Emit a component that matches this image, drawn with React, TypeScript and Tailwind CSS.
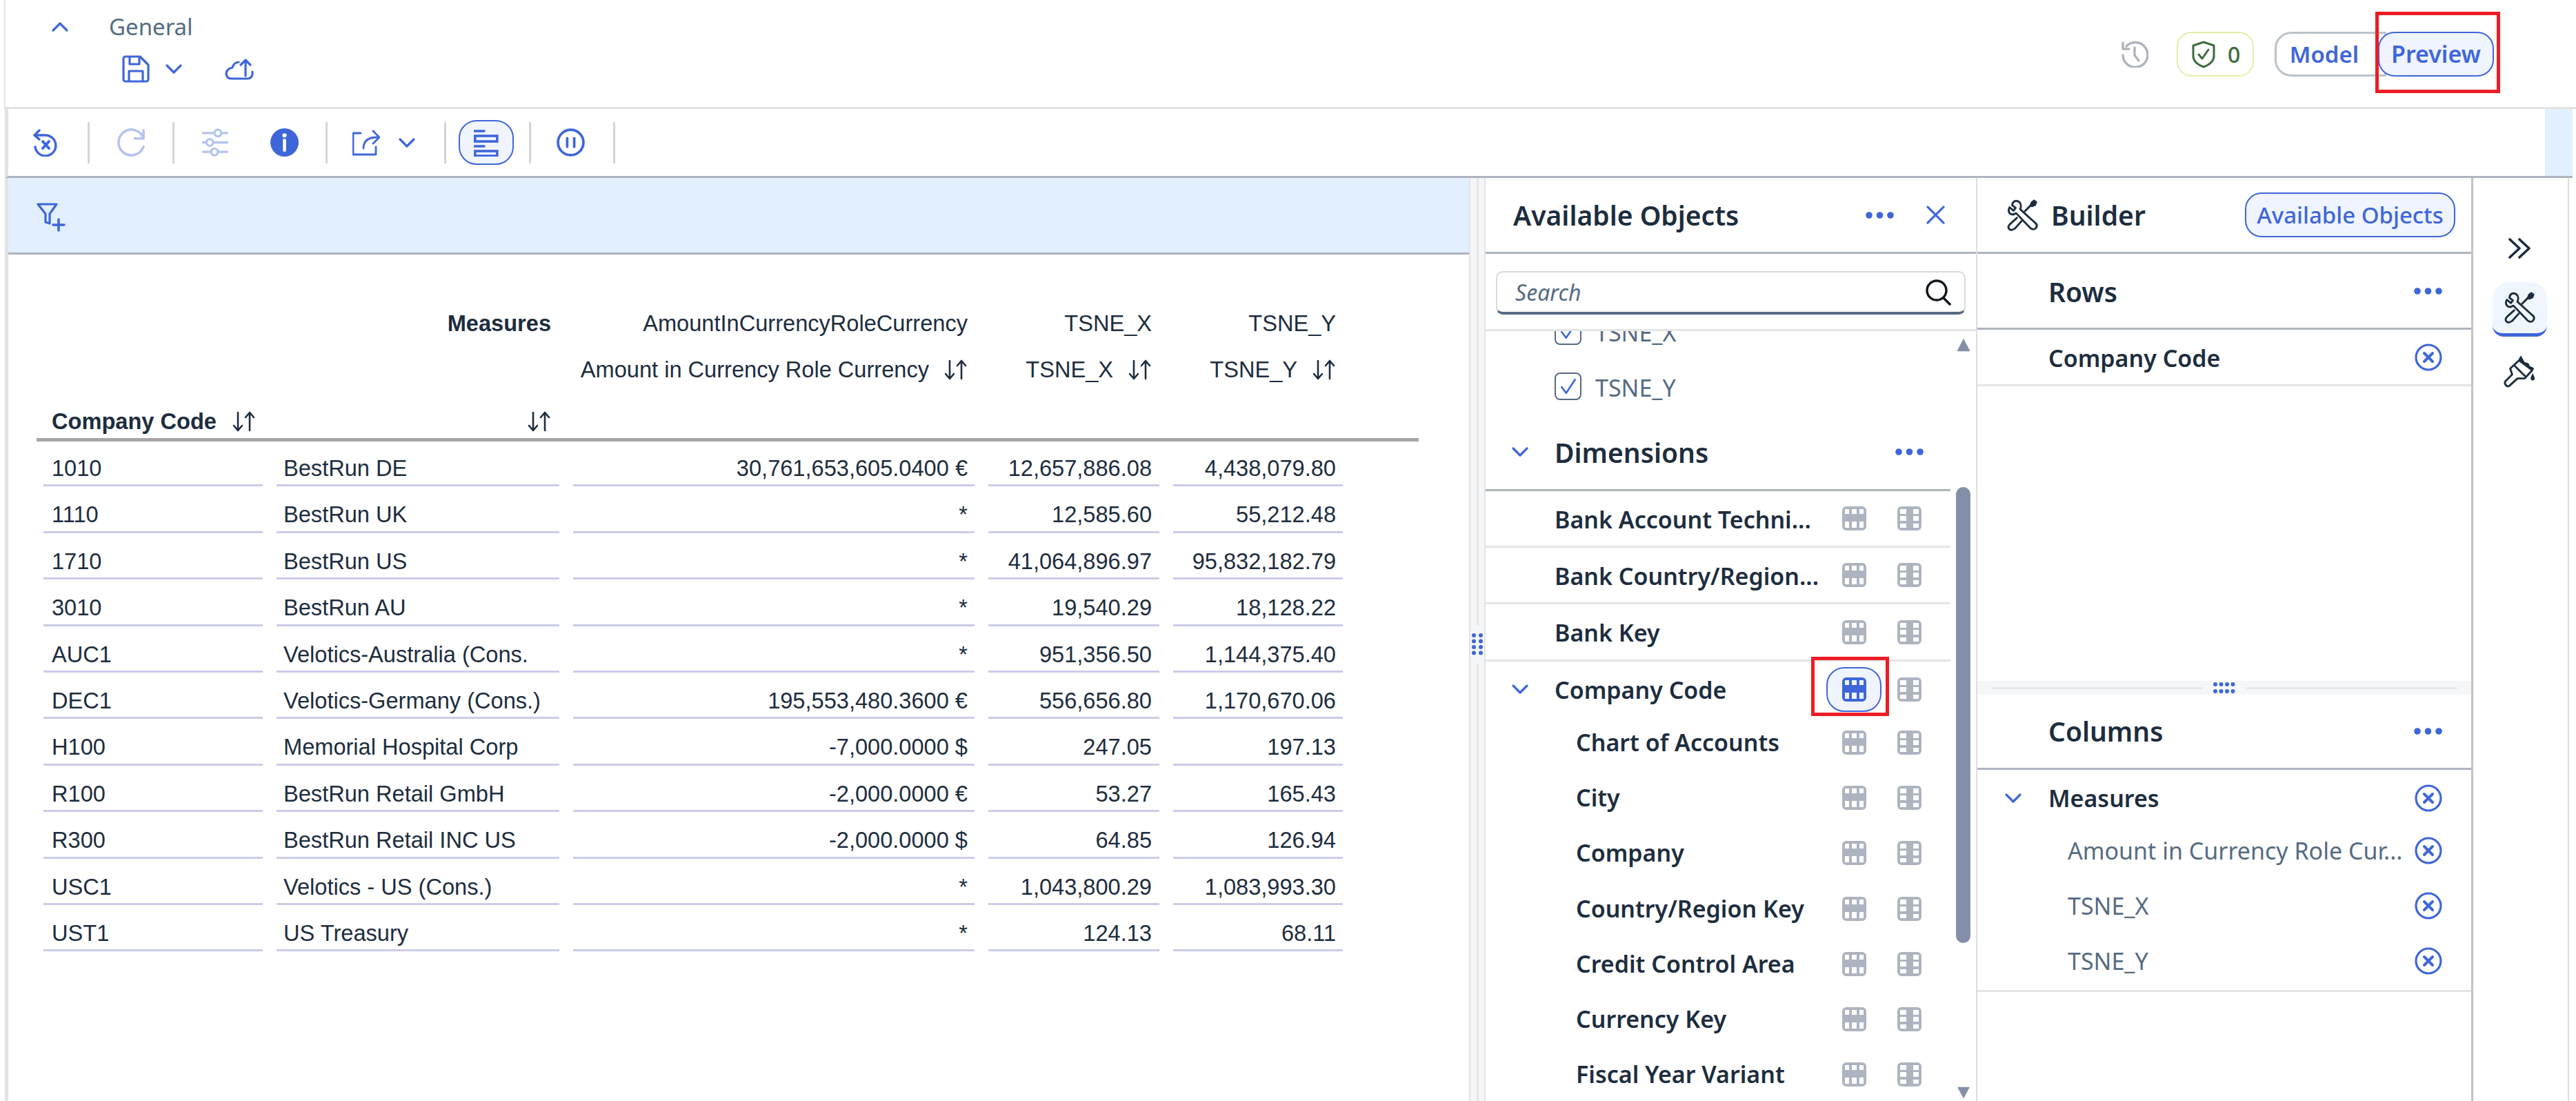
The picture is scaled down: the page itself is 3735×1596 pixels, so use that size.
const rows = [
  ["1010", "BestRun DE", "30,761,653,605.0400 €", "12,657,886.08", "4,438,079.80"],
  ["1110", "BestRun UK", "*", "12,585.60", "55,212.48"],
  ["1710", "BestRun US", "*", "41,064,896.97", "95,832,182.79"],
  ["3010", "BestRun AU", "*", "19,540.29", "18,128.22"],
  ["AUC1", "Velotics-Australia (Cons.", "*", "951,356.50", "1,144,375.40"],
  ["DEC1", "Velotics-Germany (Cons.)", "195,553,480.3600 €", "556,656.80", "1,170,670.06"],
  ["H100", "Memorial Hospital Corp", "-7,000.0000 $", "247.05", "197.13"],
  ["R100", "BestRun Retail GmbH", "-2,000.0000 €", "53.27", "165.43"],
  ["R300", "BestRun Retail INC US", "-2,000.0000 $", "64.85", "126.94"],
  ["USC1", "Velotics - US (Cons.)", "*", "1,043,800.29", "1,083,993.30"],
  ["UST1", "US Treasury", "*", "124.13", "68.11"],
];

const children = ["Chart of Accounts", "City", "Company", "Country/Region Key", "Credit Control Area", "Currency Key", "Fiscal Year Variant"];

type IconProps = { className?: string };

function Chevron({ className = "", up = false }: IconProps & { up?: boolean }) {
  return (
    <svg viewBox="0 0 26 16" className={className} fill="none" stroke="currentColor" strokeWidth="3.2" strokeLinecap="round" strokeLinejoin="round">
      <path d={up ? "M3 13 13 3l10 10" : "M3 3l10 10L23 3"} />
    </svg>
  );
}

function Dots({ className = "" }: IconProps) {
  return (
    <svg viewBox="0 0 41 12" className={className} fill="currentColor">
      <circle cx="5" cy="6" r="4.8" />
      <circle cx="20.5" cy="6" r="4.8" />
      <circle cx="36" cy="6" r="4.8" />
    </svg>
  );
}

function CircleX({ className = "" }: IconProps) {
  return (
    <svg viewBox="0 0 40 40" className={className} fill="none" stroke="currentColor">
      <circle cx="20" cy="20" r="18" strokeWidth="3.2" />
      <path d="M14 14l12 12M26 14 14 26" strokeWidth="4" strokeLinecap="round" />
    </svg>
  );
}

function SortIcon() {
  return (
    <svg viewBox="0 0 36 32" className="w-[36px] h-[32px] shrink-0 text-[#1d2d3e]" fill="none" stroke="currentColor" strokeWidth="2.6" strokeLinecap="round" strokeLinejoin="round">
      <path d="M10 3v26M4 22l6 7 6-7" />
      <path d="M27 29V3M21 10l6-7 6 7" />
    </svg>
  );
}

function ToolsIcon({ className = "" }: IconProps) {
  return (
    <svg viewBox="-1 -1 48 48" className={className} fill="none" stroke="currentColor" strokeWidth="3" strokeLinejoin="round" strokeLinecap="round">
      <path d="M17 2C12 0 8 3 8 8l5 4-3 4-6-5C1 16 3 22 9 22l5-2 21 22c3 3 7 3 9 0s1-6-2-8L20 14c2-5 1-10-3-12Z" />
      <path d="M15 27 4 37c-3 3-2 7 1 8s5-1 7-2l10-11" />
      <path d="M27 17l9-9" />
      <path d="M35 9l2-6 4-3 4 3-2 5-5 2Z" fill="currentColor" strokeWidth="1.5" />
    </svg>
  );
}

function BrushIcon({ className = "" }: IconProps) {
  return (
    <svg viewBox="-1 -1 48 48" className={className} fill="none" stroke="currentColor" strokeWidth="3" strokeLinejoin="round" strokeLinecap="round">
      <path d="M22 6 9 18l3 9L2 37c-3 4 2 10 6 7l12-11h11l11-12" />
      <path d="M15 13l16 16" />
      <path d="M25 0l-3 6 20 15 2-3-6-3-2-4-6-2Z" fill="currentColor" strokeWidth="2" />
      <path d="M43 25c-2 4-3 6-3 8a3 3 0 0 0 6 0c0-2-1-4-3-8Z" fill="currentColor" strokeWidth="0" />
    </svg>
  );
}

function RowIcon({ className = "" }: IconProps) {
  return (
    <svg viewBox="0 0 35 35" className={className} fill="currentColor">
      <path fillRule="evenodd" d="M6 0h23a6 6 0 0 1 6 6v23a6 6 0 0 1-6 6H6a6 6 0 0 1-6-6V6a6 6 0 0 1 6-6ZM4 4v7h6V4H4Zm10 0v7h7V4h-7Zm11 0v7h6V4h-6ZM4 22v9h6v-9H4Zm10 0v9h7v-9h-7Zm11 0v9h6v-9h-6Z" />
    </svg>
  );
}

function ColIcon({ className = "" }: IconProps) {
  return (
    <svg viewBox="0 0 35 35" className={className} fill="currentColor">
      <path fillRule="evenodd" d="M6 0h23a6 6 0 0 1 6 6v23a6 6 0 0 1-6 6H6a6 6 0 0 1-6-6V6a6 6 0 0 1 6-6ZM4 4v7h9V4H4Zm0 10v7h9v-7H4Zm0 11v6h9v-6H4ZM23 4v7h8V4h-8Zm0 10v7h8v-7h-8Zm0 11v6h8v-6h-8Z" />
    </svg>
  );
}

function DimRow({ label, chevron, child, border, active, className = "" }: { label: string; chevron?: boolean; child?: boolean; border?: boolean; active?: boolean; className?: string }) {
  return (
    <div className={`flex items-center ${border ? "border-b-[3px] border-[#e5e5e5]" : ""} ${className}`}>
      <div className="w-[100px] flex justify-center shrink-0">
        {chevron && <Chevron className="w-[26px] h-[16px] text-[#3f66d9]" />}
      </div>
      <div className={`flex-1 min-w-0 whitespace-nowrap text-[34px] font-semibold text-[#1d2d3e] ${child ? "pl-[31px]" : "pt-[3px]"}`}>{label}</div>
      {/* action buttons */}
      <div className="w-[80px] flex justify-center relative">
        {active ? (
          <>
            <span className="w-[80px] h-[65px] rounded-[26px] border-[2px] border-[#3f66d9] bg-[#eff4fe] flex items-center justify-center">
              <RowIcon className="w-[35px] h-[35px] text-[#3f66d9]" />
            </span>
            <span className="absolute left-[-22px] top-[-15px] w-[113px] h-[86px] border-[5px] border-[#ee1c25]" />
          </>
        ) : (
          <RowIcon className="w-[35px] h-[35px] text-[#aeb4bf]" />
        )}
      </div>
      <div className="w-[80px] flex justify-center">
        <ColIcon className="w-[35px] h-[35px] text-[#aeb4bf]" />
      </div>
      <div className="w-[20px]" />
    </div>
  );
}

function GripDots({ className = "" }: IconProps) {
  return (
    <svg viewBox="0 0 16 32" className={className} fill="currentColor">
      {[3, 11.5, 20, 28.5].flatMap((y) => [3, 13].map((x) => <circle key={`${x}-${y}`} cx={x} cy={y} r="3" />))}
    </svg>
  );
}

function GripDotsWide({ className = "" }: IconProps) {
  return (
    <svg viewBox="0 0 32 16" className={className} fill="currentColor">
      {[3, 11.5, 20, 28.5].flatMap((x) => [3, 13].map((y) => <circle key={`${x}-${y}`} cx={x} cy={y} r="3" />))}
    </svg>
  );
}

export default function App() {
  return (
    <div className="w-[3735px] h-[1596px] flex flex-col overflow-hidden bg-white font-['Noto_Sans',sans-serif]">
      {/* Top bar */}
      <header className="h-[158px] shrink-0 ml-[6px] border-l-[2px] border-b-[3px] border-[#e3e3e3] flex justify-between">
        <div className="flex flex-col">
          <div className="h-[77px] flex items-center pl-[66px]">
            <Chevron up className="w-[26px] h-[16px] text-[#3f66d9]" />
            <span className="ml-[58px] text-[33px] text-[#556b82]">General</span>
          </div>
          <div className="flex items-center pl-[169px] h-[42px] mt-[2px]">
            <svg viewBox="0 0 40 40" className="w-[40px] h-[40px] text-[#3f66d9]" fill="none" stroke="currentColor" strokeWidth="3.2" strokeLinejoin="round">
              <path d="M5 2h21l12 12v21a3 3 0 0 1-3 3H5a3 3 0 0 1-3-3V5a3 3 0 0 1 3-3Z" />
              <path d="M11 2v11h14V2M10 38V23h20v15" />
            </svg>
            <Chevron className="ml-[22px] w-[26px] h-[16px] text-[#3f66d9]" />
            <svg viewBox="0 0 42 32" className="ml-[61px] w-[42px] h-[32px] text-[#3f66d9]" fill="none" stroke="currentColor" strokeWidth="3.2" strokeLinecap="round" strokeLinejoin="round">
              <path d="M20 6c-4 0-8 3-9 8-5 1-9 4-9 9 0 4 3 7 7 7h24c4 0 7-3 7-7v-3" />
              <path d="M30 26V3M23 10l7-7 7 7" />
            </svg>
          </div>
        </div>
        <div className="flex items-start pt-[46px] pr-[119px]">
          <svg viewBox="0 0 40 40" className="w-[40px] h-[40px] mt-[12px] text-[#aeb4bb]" fill="none" stroke="currentColor" strokeWidth="3.4" strokeLinecap="round" strokeLinejoin="round">
            <path d="M8 9a18 18 0 1 1-5 13" />
            <path d="M3 4v9h9M20 11v11l6 8" />
          </svg>
          <div className="ml-[41px] w-[112px] h-[65px] rounded-[22px] border-[2px] border-[#e6eda6] flex items-center pl-[20px]">
            <svg viewBox="0 0 34 40" className="w-[34px] h-[40px] text-[#3d6b3d]" fill="none" stroke="currentColor" strokeWidth="3" strokeLinejoin="round" strokeLinecap="round">
              <path d="M17 2 32 7v15c0 8-7 13-15 16C9 35 2 30 2 22V7L17 2Z" />
              <path d="M10 20l5 6 9-13" />
            </svg>
            <span className="ml-[18px] text-[32px] font-medium text-[#3d6b3d]">0</span>
          </div>
          <button className="ml-[30px] w-[162px] h-[65px] rounded-l-[24px] border-[3px] border-[#bcc3ca] pr-[18px] text-[33px] font-semibold text-[#3f66d9]">Model</button>
          <button className="relative -ml-[12px] w-[168px] h-[65px] rounded-[24px] border-[2px] border-[#3f66d9] bg-[#eff4fe] text-[34px] font-semibold text-[#3f66d9]">
            Preview
            <span className="absolute left-[-6px] top-[-31px] w-[181px] h-[118px] border-[5px] border-[#ee1c25]" />
          </button>
        </div>
      </header>

      {/* Toolbar */}
      <div className="h-[100px] shrink-0 ml-[7px] mr-[5px] border-l-[5px] border-b-[3px] border-[#e3e3e3] border-b-[#aeb4c0] flex items-center">
        <div className="w-[115px] pr-[7px] flex justify-center">
          <svg viewBox="0 0 36 40" className="w-[36px] h-[40px] text-[#3f66d9]" fill="none" stroke="currentColor" strokeWidth="3.4" strokeLinecap="round" strokeLinejoin="round">
            <path d="M9 2 2 9l7 6" />
            <path d="M3 9h15a15 15 0 1 1-15 17" />
            <path d="M14 18l9 10M23 18l-9 10" strokeWidth="4" />
          </svg>
        </div>
        <span className="w-[3px] h-[60px] bg-[#d4d4d4]" />
        <div className="w-[120px] flex justify-center">
          <svg viewBox="0 0 42 42" className="w-[41px] h-[41px] text-[#b4c3f0]" fill="none" stroke="currentColor" strokeWidth="3.6" strokeLinecap="round" strokeLinejoin="round">
            <path d="M39 15A19 19 0 1 0 39 27" />
            <path d="M39 3v12H26" />
          </svg>
        </div>
        <span className="w-[3px] h-[60px] bg-[#d4d4d4]" />
        <div className="w-[118px] flex justify-center">
          <svg viewBox="0 0 40 42" className="w-[40px] h-[41px] text-[#b4c3f0]" fill="none" stroke="currentColor" strokeWidth="3.4" strokeLinecap="round">
            <path d="M2 7h15M31 7h7M2 21h4M19 21h19M2 35h10M26 35h12" />
            <circle cx="24" cy="7" r="5" />
            <circle cx="12" cy="21" r="5" />
            <circle cx="19" cy="35" r="5" />
          </svg>
        </div>
        <div className="w-[82px] flex justify-center">
          <svg viewBox="0 0 40 40" className="w-[41px] h-[41px] text-[#3f66d9]">
            <circle cx="20" cy="20" r="20" fill="currentColor" />
            <circle cx="20" cy="10" r="3" fill="#fff" />
            <path d="M20 17v14" stroke="#fff" strokeWidth="4.5" strokeLinecap="round" />
          </svg>
        </div>
        <div className="w-[19px]" />
        <span className="w-[3px] h-[60px] bg-[#d4d4d4]" />
        <div className="w-[169px] flex items-center pl-[36px]">
          <svg viewBox="0 0 40 38" className="w-[40px] h-[38px] text-[#3f66d9]" fill="none" stroke="currentColor" strokeWidth="2.8" strokeLinecap="round" strokeLinejoin="round">
            <path d="M12 5H1v31h33V25" />
            <path d="M16 27c0-10 6-16 20-16" />
            <path d="M30 2l9 9-9 9" />
          </svg>
          <Chevron className="ml-[26px] w-[26px] h-[16px] text-[#3f66d9]" />
        </div>
        <span className="w-[3px] h-[60px] bg-[#d4d4d4]" />
        <button className="ml-[18px] w-[80px] h-[65px] rounded-[26px] border-[2px] border-[#3f66d9] bg-[#eff4fe] flex items-center justify-center">
          <svg viewBox="0 0 36 40" className="w-[36px] h-[40px] text-[#3f66d9]" fill="none" stroke="currentColor" strokeWidth="3.6">
            <path d="M1 3h14M1 25h14" strokeLinecap="round" />
            <rect x="1.8" y="10" width="32" height="8" />
            <rect x="1.8" y="32" width="32" height="7" />
          </svg>
        </button>
        <div className="w-[22px]" />
        <span className="w-[3px] h-[60px] bg-[#d4d4d4]" />
        <div className="w-[119px] pr-[4px] flex justify-center">
          <svg viewBox="0 0 40 40" className="w-[41px] h-[41px] text-[#3f66d9]" fill="none" stroke="currentColor">
            <circle cx="20" cy="20" r="18" strokeWidth="3.6" />
            <path d="M15 14v12M25 14v12" strokeWidth="3.6" strokeLinecap="round" />
          </svg>
        </div>
        <span className="w-[3px] h-[60px] bg-[#d4d4d4]" />
        <div className="flex-1" />
        <div className="w-[40px] h-full bg-[#e1effe]" />
      </div>

      {/* Main area */}
      <div className="flex-1 min-h-0 flex">
        {/* Table panel */}
        <section className="ml-[7px] w-[2123px] shrink-0 border-l-[5px] border-[#e3e3e3] flex flex-col">
          <div className="h-[111px] shrink-0 bg-[#e1effe] border-b-[3px] border-[#aeb4c0] flex items-start pl-[41px] pt-[36px]">
            <svg viewBox="0 0 42 42" className="w-[42px] h-[42px] text-[#3f66d9]" fill="none" stroke="currentColor" strokeWidth="3.2" strokeLinejoin="round" strokeLinecap="round">
              <path d="M2 2h27L19 16v14l-6 -2V16L2 2Z" />
              <path d="M32 24v16M24 32h16" strokeWidth="3.6" />
            </svg>
          </div>
          <div className="ml-[41px] w-[2004px] font-['Liberation_Sans',sans-serif] text-[32.6px] text-[#1d2d3e]">
            <div className="h-[271px] border-b-[5px] border-[#a6a6a6] pl-[10px] flex flex-col">
              <div className="h-[67px] shrink-0" />
              <div className="flex h-[67px] shrink-0 items-center">
                <div className="w-[736px] text-right font-bold">Measures</div>
                <div className="w-[604px] text-right">AmountInCurrencyRoleCurrency</div>
                <div className="w-[267px] text-right">TSNE_X</div>
                <div className="w-[267px] text-right">TSNE_Y</div>
              </div>
              <div className="flex h-[67px] shrink-0 items-center">
                <div className="w-[736px]" />
                <div className="w-[604px] flex justify-end items-center gap-[20px]">Amount in Currency Role Currency <SortIcon /></div>
                <div className="w-[267px] flex justify-end items-center gap-[20px]">TSNE_X <SortIcon /></div>
                <div className="w-[267px] flex justify-end items-center gap-[20px]">TSNE_Y <SortIcon /></div>
              </div>
              <div className="flex flex-1 items-center pl-[12px] pt-[17px]">
                <div className="flex items-center font-bold gap-[21px] w-[724px]">
                  Company Code <SortIcon />
                  <span className="flex-1 flex justify-end"><SortIcon /></span>
                </div>
              </div>
            </div>
            <div className="-mt-[2px]">
              {rows.map((r) => (
                <div key={r[0]} className="grid grid-cols-[318px_410px_582px_248px_246px] gap-x-[20px] h-[67.4px] ml-[10px]">
                  <div className="border-b-[3px] border-[#cbcbe9] pl-[12px] pt-[22px] leading-[38px]">{r[0]}</div>
                  <div className="border-b-[3px] border-[#cbcbe9] pl-[10px] pt-[22px] leading-[38px] whitespace-nowrap">{r[1]}</div>
                  <div className="border-b-[3px] border-[#cbcbe9] pr-[10px] pt-[22px] leading-[38px] text-right">{r[2]}</div>
                  <div className="border-b-[3px] border-[#cbcbe9] pr-[11px] pt-[22px] leading-[38px] text-right">{r[3]}</div>
                  <div className="border-b-[3px] border-[#cbcbe9] pr-[10px] pt-[22px] leading-[38px] text-right">{r[4]}</div>
                </div>
              ))}
            </div>
          </div>
        </section>

        {/* Splitter */}
        <div className="w-[24px] shrink-0 bg-[#f5f6f7] border-x-[2px] border-[#e3e3e3] flex flex-col items-center">
          <div className="w-[3px] h-[648px] bg-[#e5e5e5]" />
          <GripDots className="my-[12px] w-[16px] h-[32px] text-[#3f66d9]" />
          <div className="w-[3px] flex-1 bg-[#e5e5e5]" />
        </div>

        {/* Available objects */}
        <section className="w-[713px] shrink-0 border-r-[2px] border-[#dcdee3] flex flex-col">
          <div className="h-[110px] shrink-0 border-b-[3px] border-[#aeb4c0] flex items-center pl-[40px]">
            <h2 className="flex-1 pt-[2px] text-[39px] font-semibold text-[#1d2d3e]">Available Objects</h2>
            <Dots className="w-[41px] h-[12px] text-[#3f66d9]" />
            <svg viewBox="0 0 28 28" className="ml-[47px] mr-[45px] w-[27px] h-[27px] text-[#3f66d9]" fill="none" stroke="currentColor" strokeWidth="3.2" strokeLinecap="round">
              <path d="M2 2l24 24M26 2 2 26" />
            </svg>
          </div>
          <div className="h-[112px] shrink-0 border-b-[3px] border-[#e5e5e5] pt-[25px] px-[15px]">
            <div className="h-[63px] rounded-[10px] border-[2px] border-b-[4px] border-[#d6dade] border-b-[#556b82] flex items-center justify-between pl-[26px] pr-[19px]">
              <span className="italic text-[32px] text-[#556b82]">Search</span>
              <svg viewBox="0 0 38 38" className="w-[38px] h-[38px] text-[#10151c]" fill="none" stroke="currentColor" strokeWidth="3.4" strokeLinecap="round">
                <circle cx="17" cy="16" r="14" />
                <path d="M27 27l9 9" />
              </svg>
            </div>
          </div>
          <div className="flex-1 min-h-0 flex overflow-hidden">
            <div className="w-[674px] shrink-0 -mt-[40px]">
              {["TSNE_X", "TSNE_Y"].map((t) => (
                <div key={t} className="h-[80px] flex items-center pl-[100px]">
                  <span className="w-[39px] h-[40px] rounded-[8px] border-[2px] border-[#556b82] flex items-center justify-center">
                    <svg viewBox="0 0 24 24" className="w-[26px] h-[26px] text-[#3f66d9]" fill="none" stroke="currentColor" strokeWidth="2.4" strokeLinecap="round" strokeLinejoin="round">
                      <path d="M3 13l6 8L21 3" />
                    </svg>
                  </span>
                  <span className="ml-[20px] pt-[5px] text-[34px] text-[#556b82]">{t}</span>
                </div>
              ))}
              <div className="h-[112px] border-b-[3px] border-[#aeb4c0] flex items-center">
                <div className="w-[100px] flex justify-center"><Chevron className="w-[26px] h-[16px] text-[#3f66d9]" /></div>
                <h3 className="flex-1 pt-[4px] text-[39px] font-semibold text-[#1d2d3e]">Dimensions</h3>
                <Dots className="w-[41px] h-[12px] text-[#3f66d9] mr-[39px]" />
              </div>
              <DimRow label="Bank Account Techni..." border className="h-[82px]" />
              <DimRow label="Bank Country/Region..." border className="h-[82px]" />
              <DimRow label="Bank Key" border className="h-[83px]" />
              <DimRow label="Company Code" chevron active className="h-[77px] pt-[3px]" />
              {children.map((c) => (
                <DimRow key={c} label={c} child className="h-[80.3px]" />
              ))}
            </div>
            {/* scrollbar */}
            <div className="flex-1 flex flex-col items-center">
              <svg viewBox="0 0 24 24" className="mt-[10px] w-[24px] h-[20px] text-[#8490a8] shrink-0" fill="currentColor"><path d="M12 1 23 22a1 1 0 0 1-1 1H2a1 1 0 0 1-1-1Z" /></svg>
              <div className="mt-[196px] w-[21px] h-[661px] shrink-0 rounded-full bg-[#8490a8]" />
              <svg viewBox="0 0 24 24" className="mt-[208px] w-[24px] h-[18px] text-[#8490a8] shrink-0" fill="currentColor"><path d="M12 23 1 3a1 1 0 0 1 1-2h20a1 1 0 0 1 1 2Z" /></svg>
            </div>
          </div>
        </section>

        {/* Builder */}
        <section className="w-[719px] shrink-0 border-r-[3px] border-[#c4c2c4] flex flex-col">
          <div className="h-[110px] shrink-0 border-b-[3px] border-[#aeb4c0] flex items-center pl-[42px] pr-[23px]">
            <ToolsIcon className="w-[46px] h-[46px] text-[#1d2d3e]" />
            <h2 className="flex-1 ml-[19px] pt-[2px] text-[39px] font-semibold text-[#1d2d3e]">Builder</h2>
            <button className="w-[305px] h-[65px] rounded-[24px] border-[2px] border-[#3f66d9] bg-[#eff4fe] text-[33px] font-medium text-[#3f66d9]">Available Objects</button>
          </div>
          <div className="h-[110px] shrink-0 border-b-[3px] border-[#aeb4c0] flex items-center pl-[103px] pr-[42px] justify-between">
            <span className="pt-[3px] text-[39px] font-semibold text-[#1d2d3e]">Rows</span>
            <Dots className="w-[41px] h-[12px] text-[#3f66d9]" />
          </div>
          <div className="h-[82px] shrink-0 border-b-[3px] border-[#e5e5e5] flex items-center pl-[103px] pr-[42px] justify-between">
            <span className="pt-[3px] text-[34px] font-semibold text-[#1d2d3e]">Company Code</span>
            <CircleX className="w-[40px] h-[40px] text-[#3f66d9]" />
          </div>
          <div className="flex-1 min-h-0" />
          <div className="h-[20px] shrink-0 bg-[#f5f6f7] flex items-center justify-center gap-[16px]">
            <span className="flex-1 h-[3px] bg-[#e9e9ea] ml-[20px]" />
            <GripDotsWide className="w-[32px] h-[16px] text-[#3f66d9]" />
            <span className="flex-1 h-[3px] bg-[#e9e9ea] mr-[20px]" />
          </div>
          <div className="h-[109px] shrink-0 border-b-[3px] border-[#aeb4c0] flex items-center pl-[103px] pr-[42px] justify-between">
            <span className="text-[39px] font-semibold text-[#1d2d3e]">Columns</span>
            <Dots className="w-[41px] h-[12px] text-[#3f66d9]" />
          </div>
          <div className="h-[322px] shrink-0 border-b-[3px] border-[#e5e5e5] flex flex-col">
            <div className="h-[77px] pt-[5px] flex items-center pr-[42px]">
              <div className="w-[103px] flex justify-center"><Chevron className="w-[26px] h-[16px] text-[#3f66d9]" /></div>
              <span className="flex-1 text-[34px] font-semibold text-[#1d2d3e]">Measures</span>
              <CircleX className="w-[40px] h-[40px] text-[#3f66d9]" />
            </div>
            {["Amount in Currency Role Cur...", "TSNE_X", "TSNE_Y"].map((t) => (
              <div key={t} className="h-[80px] flex items-center pl-[131px] pr-[42px] justify-between">
                <span className="text-[34px] text-[#556b82] whitespace-nowrap">{t}</span>
                <CircleX className="w-[40px] h-[40px] text-[#3f66d9]" />
              </div>
            ))}
          </div>
          <div className="h-[158px] shrink-0" />
        </section>

        {/* Side rail */}
        <aside className="w-[139px] shrink-0 mr-[10px] border-r-[2px] border-[#dcdee3] flex flex-col items-center pt-[87px] pr-[3px]">
          <svg viewBox="0 0 36 30" className="w-[36px] h-[30px] text-[#1d2d3e]" fill="none" stroke="currentColor" strokeWidth="3.6" strokeLinecap="round" strokeLinejoin="round">
            <path d="M4 2l14 13L4 28M18 2l14 13-14 13" />
          </svg>
          <div className="mt-[34px] w-[79px] h-[79px] rounded-t-[24px] rounded-b-[16px] bg-[#eff6fd] border-b-[5px] border-[#3f66d9] flex items-center justify-center">
            <ToolsIcon className="w-[46px] h-[46px] text-[#1d2d3e]" />
          </div>
          <BrushIcon className="mt-[28px] w-[46px] h-[46px] text-[#1d2d3e]" />
        </aside>
      </div>
    </div>
  );
}
